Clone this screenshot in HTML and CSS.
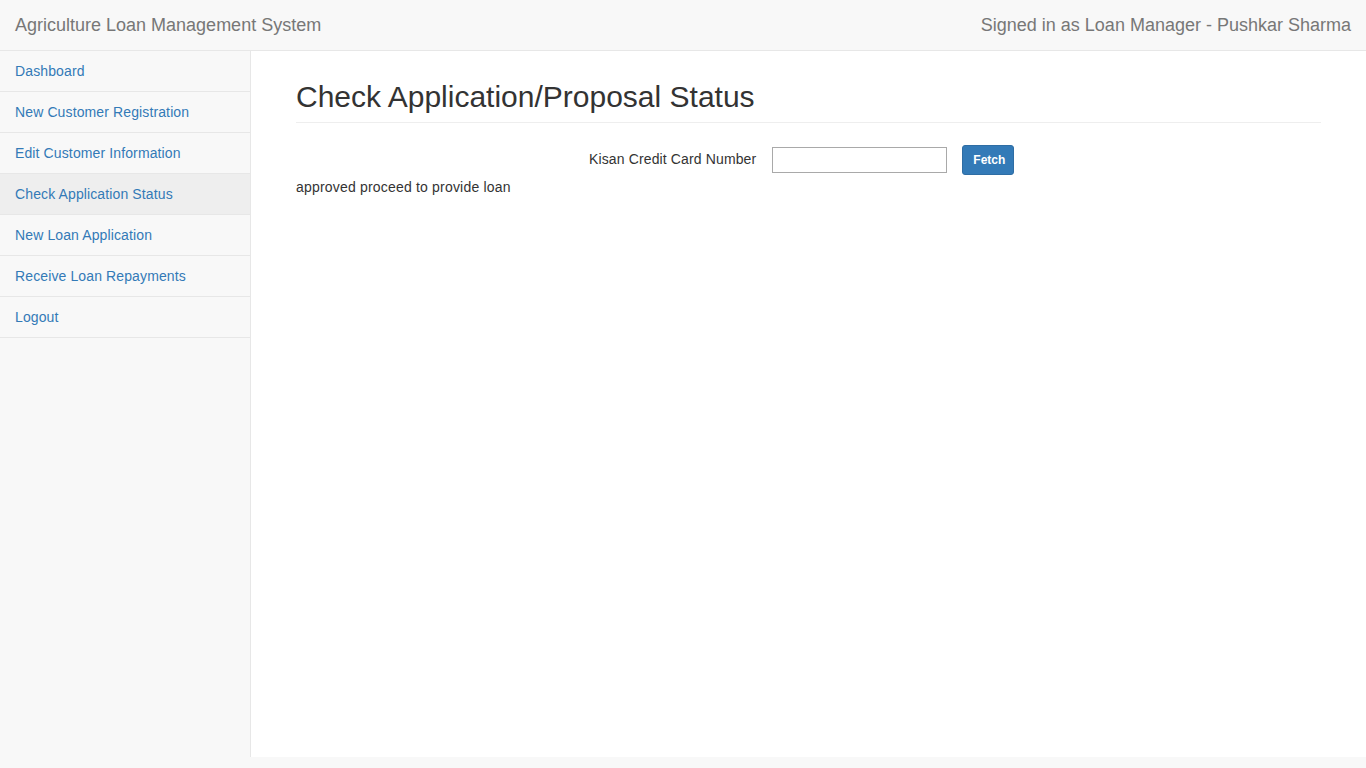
FILE: index.html
```html
<!DOCTYPE html>
<html>
<head>
<meta charset="utf-8">
<title>Agriculture Loan Management System</title>
<link rel="stylesheet" href="styles.css">
</head>
<body>
<div class="wrapper">
  <nav class="navbar">
    <a class="brand" href="#">Agriculture Loan Management System</a>
    <span class="signed">Signed in as Loan Manager - Pushkar Sharma</span>
  </nav>
  <div class="main">
    <aside class="sidebar">
      <ul class="side-nav">
        <li><a href="#">Dashboard</a></li>
        <li><a href="#">New Customer Registration</a></li>
        <li><a href="#">Edit Customer Information</a></li>
        <li class="active"><a href="#">Check Application Status</a></li>
        <li><a href="#">New Loan Application</a></li>
        <li><a href="#">Receive Loan Repayments</a></li>
        <li><a href="#">Logout</a></li>
      </ul>
    </aside>
    <section class="page">
      <h1 class="page-header">Check Application/Proposal Status</h1>
      <form class="fetch-form">
        <label class="ccn-label" for="ccn">Kisan Credit Card Number</label>
        <input class="ccn-input" id="ccn" type="text">
        <button class="btn" type="button">Fetch</button>
      </form>
      <p class="status">approved proceed to provide loan</p>
    </section>
  </div>
</div>
</body>
</html>
```
FILE: styles.css
```css
* { box-sizing: border-box; }
html, body { margin: 0; padding: 0; }
body {
  font-family: "Liberation Sans", Arial, Helvetica, sans-serif;
  font-size: 14px;
  line-height: 1.42857;
  color: #333;
  background: #f8f8f8;
}
.wrapper { width: 100%; }
.navbar {
  height: 51px;
  background: #f8f8f8;
  border-bottom: 1px solid #e7e7e7;
  display: flex;
  justify-content: space-between;
  align-items: center;
  padding: 0 15px;
}
.brand {
  color: #777;
  font-size: 18px;
  text-decoration: none;
  line-height: 20px;
}
.signed {
  color: #777;
  font-size: 18px;
  line-height: 20px;
}
.main {
  display: flex;
  min-height: 706px;
}
.sidebar {
  width: 251px;
  flex: none;
  background: #f8f8f8;
  border-right: 1px solid #e7e7e7;
}
.side-nav {
  list-style: none;
  margin: 0;
  padding: 0;
}
.side-nav li {
  border-bottom: 1px solid #e7e7e7;
}
.side-nav a {
  display: block;
  padding: 10px 15px;
  line-height: 20px;
  color: #337ab7;
  text-decoration: none;
  letter-spacing: 0.12px;
}
.side-nav li.active a { background: #eee; }
.page {
  flex: 1;
  background: #fff;
  padding: 0 45px;
}
.page-header {
  margin: 29px 0 0;
  padding-bottom: 9px;
  border-bottom: 1px solid #eee;
  font-size: 30px;
  font-weight: 500;
  line-height: 1.1;
  color: #333;
}
.fetch-form {
  display: flex;
  align-items: center;
  margin-top: 22px;
  padding-left: 293px;
}
.ccn-label {
  font-size: 14px;
  color: #333;
  margin-right: 16px;
  letter-spacing: 0.13px;
}
.ccn-input {
  width: 175px;
  height: 26px;
  border: 1px solid #a9a9a9;
  border-radius: 0;
  padding: 1px 2px;
  font: 14px "Liberation Sans", Arial, sans-serif;
  margin-right: 15px;
}
.btn {
  background: #337ab7;
  border: 1px solid #2e6da4;
  color: #fff;
  font: bold 12px "Liberation Sans", Arial, sans-serif;
  line-height: 18px;
  padding: 5px 10px;
  border-radius: 3px;
  height: 30px;
  width: 52px;
}
.status {
  margin: 3px 0 0;
  letter-spacing: 0.19px;
}
```
